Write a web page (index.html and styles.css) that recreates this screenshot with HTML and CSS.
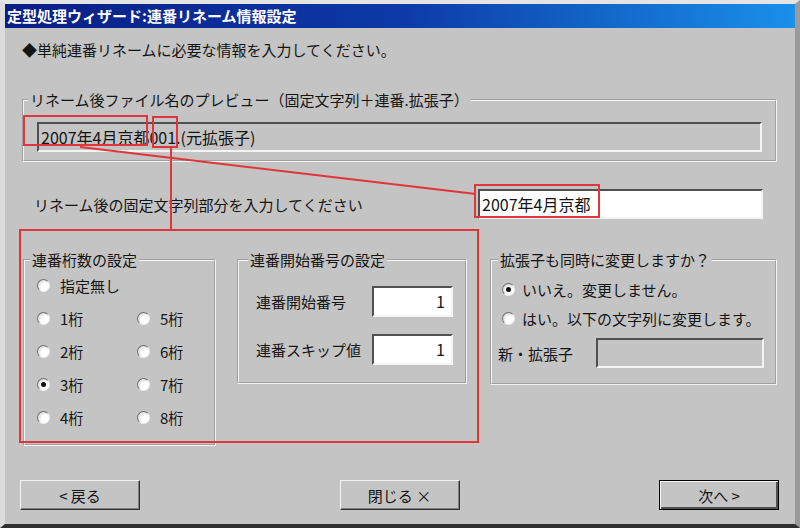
FILE: index.html
```html
<!DOCTYPE html>
<html lang="ja">
<head>
<meta charset="UTF-8">
<title>定型処理ウィザード:連番リネーム情報設定</title>
<link rel="stylesheet" href="styles.css">
</head>
<body>
<div class="window">
  <div class="titlebar">定型処理ウィザード:連番リネーム情報設定</div>

  <div class="content">
    <p class="lead">◆単純連番リネームに必要な情報を入力してください。</p>

    <fieldset class="group preview">
      <legend>リネーム後ファイル名のプレビュー（固定文字列＋連番.拡張子）</legend>
      <div class="field disabled">2007年4月京都001.(元拡張子)</div>
    </fieldset>

    <div class="fixed-row">
      <label>リネーム後の固定文字列部分を入力してください</label>
      <div class="field fixed">2007年4月京都</div>
    </div>

    <div class="groups">
      <!-- 桁数 -->
      <fieldset class="group digits">
        <legend>連番桁数の設定</legend>
        <div class="radio-grid">
          <div class="opt wide"><span class="radio"></span>指定無し</div>
          <div class="opt"><span class="radio"></span>1桁</div>
          <div class="opt"><span class="radio"></span>5桁</div>
          <div class="opt"><span class="radio"></span>2桁</div>
          <div class="opt"><span class="radio"></span>6桁</div>
          <div class="opt"><span class="radio checked"></span>3桁</div>
          <div class="opt"><span class="radio"></span>7桁</div>
          <div class="opt"><span class="radio"></span>4桁</div>
          <div class="opt"><span class="radio"></span>8桁</div>
        </div>
      </fieldset>

      <!-- 開始番号 -->
      <fieldset class="group start">
        <legend>連番開始番号の設定</legend>
        <div class="num-row">
          <span>連番開始番号</span>
          <div class="field num">1</div>
        </div>
        <div class="num-row">
          <span>連番スキップ値</span>
          <div class="field num">1</div>
        </div>
      </fieldset>

      <!-- 拡張子 -->
      <fieldset class="group ext">
        <legend>拡張子も同時に変更しますか？</legend>
        <div class="opt"><span class="radio checked"></span>いいえ。変更しません。</div>
        <div class="opt"><span class="radio"></span>はい。以下の文字列に変更します。</div>
        <div class="ext-row">
          <span>新・拡張子</span>
          <div class="field disabled ext-field"></div>
        </div>
      </fieldset>
    </div>

    <div class="buttons">
      <button class="btn">&lt; 戻る</button>
      <button class="btn">閉じる ×</button>
      <button class="btn default">次へ &gt;</button>
    </div>
  </div>
</div>

<!-- 赤い注釈 -->
<svg class="marks" width="800" height="528" viewBox="0 0 800 528">
  <g fill="none" stroke="#e0353a" stroke-width="2">
    <rect x="24" y="116" width="123" height="29"/>
    <rect x="153" y="117" width="24" height="30"/>
    <line x1="80" y1="147" x2="476" y2="194"/>
    <line x1="171" y1="147" x2="171" y2="230"/>
    <rect x="475" y="185" width="124" height="32"/>
    <rect x="20" y="230" width="458" height="212"/>
  </g>
</svg>
</body>
</html>
```

FILE: styles.css
```css
body{margin:0;position:relative;font-family:"Noto Sans CJK JP","Noto Sans",sans-serif;font-size:15px;color:#151515}
.window{width:800px;height:528px;box-sizing:border-box;background:#c4c4c4;
  border-top:4px solid #e4e4e4;border-left:5px solid #dcdcdc;border-right:5px solid #9a9a9a;border-bottom:4px solid #303030}
.titlebar{height:24px;line-height:24px;padding-left:2px;color:#fff;font-weight:bold;
  background:linear-gradient(to right,#0a1e84,#0c3aa8 50%,#1a90e8)}
.content{padding:11px 18px 0 17px}
.lead{margin:0;line-height:22px}

/* グループ枠 */
.group{margin:0;border:2px groove #f4f4f4;min-width:0;box-sizing:border-box}
.group legend{line-height:18px;padding:0 2px}
.preview{margin-top:30px;padding:13px 13px 8px 13px}
.preview legend{margin-left:-9px}

/* 入力欄 */
.field{box-sizing:border-box;height:30px;line-height:26px;font-size:16px;padding-left:2px;
  border:2px solid;border-color:#505050 #f4f4f4 #f4f4f4 #505050;background:#fff;white-space:nowrap;overflow:hidden}
.field.disabled{background:#c4c4c4}

.fixed-row{display:flex;align-items:center;margin-top:27px}
.fixed-row label{padding-left:12px}
.fixed{width:285px;margin-left:auto;margin-right:14px}

.groups{display:flex;align-items:flex-start;margin-top:32px}
.digits{margin-left:1px;width:193px;padding:0 8px 10px 12px}
.digits legend{margin-left:-7px}
.start{margin-left:21px;width:230px;padding:17px 12px 17px 17px}
.start legend{margin-left:-8px}
.ext{margin-left:23px;width:287px;padding:6px 11px 15px 10px}
.ext legend{margin-left:-4px}

/* ラジオ */
.radio-grid{display:grid;grid-template-columns:100px 1fr}
.opt{display:flex;align-items:center;height:33px;gap:10px;white-space:nowrap}
.opt.wide{grid-column:1 / 3}
.ext .opt{height:29px;gap:7px}
.radio{width:13px;height:13px;box-sizing:border-box;border-radius:50%;position:relative;
  background:radial-gradient(circle at 65% 65%,#fff 35%,#dcdcdc 75%);
  border:1px solid;border-color:#707070 #f0f0f0 #f0f0f0 #707070}
.radio.checked::after{content:"";position:absolute;left:3px;top:3px;width:5px;height:5px;border-radius:50%;background:#111}

.num-row{display:flex;align-items:center;justify-content:space-between}
.num-row + .num-row{margin-top:17px}
.num{width:81px;height:31px;text-align:right;padding-right:6px}

.ext-row{display:flex;align-items:center;margin-top:5px}
.ext-row span{margin-left:-4px}
.ext-field{width:168px;margin-left:auto}

/* ボタン */
.buttons{display:flex;justify-content:space-between;margin:34px -2px 0 -2px}
.btn{width:120px;height:30px;font:inherit;color:#151515;background:#c4c4c4;padding:0;
  border:1px solid;border-color:#f4f4f4 #303030 #303030 #f4f4f4;box-shadow:inset -1px -1px #808080}
.btn.default{border-color:#000;box-shadow:inset 1px 1px #f4f4f4,inset -2px -2px #505050}

.marks{position:absolute;left:0;top:0;pointer-events:none}
```
